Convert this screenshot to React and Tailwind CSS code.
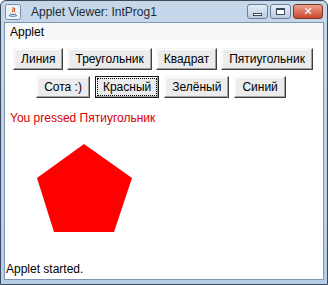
import React from 'react'

const ROW1 = ['Линия', 'Треугольник', 'Квадрат', 'Пятиугольник']
const ROW2 = ['Сота :)', 'Красный', 'Зелёный', 'Синий']

function AwtButton({ label, focused }) {
  return (
    <div
      className={`h-[22px] px-[1px] py-[1px] bg-[#ececec] border ${
        focused ? 'border-[#1a1a1a]' : 'border-t-[#f4f4f4] border-l-[#f4f4f4] border-r-[#404040] border-b-[#404040]'
      } shadow-[inset_-1px_-1px_0_#a0a0a0,inset_1px_1px_0_#ffffff]`}
    >
      <div
        className={`h-full flex items-center px-[5px] text-[12px] leading-none text-black ${
          focused ? 'border border-dotted border-black' : 'border border-transparent'
        }`}
      >
        {label}
      </div>
    </div>
  )
}

function JavaIcon() {
  return (
    <svg width="16" height="16" viewBox="0 0 16 16">
      <rect x="0.5" y="0.5" width="15" height="15" rx="2" fill="#eef2f7" stroke="#7d8ea3" />
      <path d="M4 11.5 C6 12.5 10 12.5 12 11.5" stroke="#3a6ea5" strokeWidth="1.2" fill="none" />
      <path d="M5 10 C7 10.8 9 10.8 11 10" stroke="#3a6ea5" strokeWidth="1" fill="none" />
      <path d="M8 3 C9.5 5 6.5 6 8 8.5 M9.5 4 C10.5 5.5 8.5 6.5 9.5 8" stroke="#d9541e" strokeWidth="1.1" fill="none" />
    </svg>
  )
}

function CaptionButtons() {
  return (
    <div className="flex gap-[2px] items-center">
      <div className="w-[21px] h-[15px] rounded-[3px] border border-[#6d7f95] bg-gradient-to-b from-[#e6eef7] to-[#b9cbe0] flex items-center justify-center">
        <div className="w-[9px] h-[3px] border border-[#3c4a5c] bg-white mt-[5px]" />
      </div>
      <div className="w-[21px] h-[15px] rounded-[3px] border border-[#6d7f95] bg-gradient-to-b from-[#e6eef7] to-[#b9cbe0] flex items-center justify-center">
        <div className="w-[9px] h-[7px] border border-[#3c4a5c] border-t-2 bg-white" />
      </div>
      <div className="w-[30px] h-[15px] rounded-[3px] border border-[#7a3a2a] bg-gradient-to-b from-[#eba08a] to-[#c9452b] flex items-center justify-center">
        <span className="text-white text-[11px] font-bold leading-none font-['DejaVu_Sans',sans-serif]">✕</span>
      </div>
    </div>
  )
}

export default function App() {
  return (
    <div className="w-[328px] h-[285px] bg-white">
      <div className="w-full h-full flex flex-col bg-gradient-to-b from-[#c6d7ea] to-[#b5cde6] border border-[#3b4a5c] rounded-t-[6px] font-['Liberation_Sans',Arial,sans-serif]">
        {/* Title bar */}
        <div className="h-[21px] flex items-center pl-[4px] pr-[4px] shrink-0">
          <JavaIcon />
          <span className="ml-[10px] text-[12px] text-[#1e2a36]">Applet Viewer: IntProg1</span>
          <div className="flex-1" />
          <CaptionButtons />
        </div>

        {/* Client area */}
        <div className="flex-1 mx-[3px] mb-[4px] border border-[#7f97b2] flex flex-col bg-white min-h-0">
          <div className="h-[17px] bg-[#f6f7f9] flex items-center pl-[5px] text-[12px] text-black shrink-0">Applet</div>

          <div className="flex-1 flex flex-col bg-white min-h-0">
            <div className="flex justify-center gap-[4px] mt-[8px] pr-[2px]">
              {ROW1.map(l => <AwtButton key={l} label={l} />)}
            </div>
            <div className="flex justify-center gap-[5px] mt-[6px] pr-[6px]">
              {ROW2.map(l => <AwtButton key={l} label={l} focused={l === 'Красный'} />)}
            </div>
            <div className="mt-[14px] pl-[5px] text-[12px] text-[#d40000] leading-none">You pressed Пятиугольник</div>
            <svg className="ml-[32px] mt-[20px]" width="100" height="92" viewBox="0 0 100 92">
              <polygon points="47,0 95,34 77,88 17,88 0,34" fill="#ff0000" />
            </svg>
          </div>

          <div className="h-[20px] flex items-center pl-[1px] text-[12px] text-black shrink-0">Applet started.</div>
        </div>
      </div>
    </div>
  )
}
